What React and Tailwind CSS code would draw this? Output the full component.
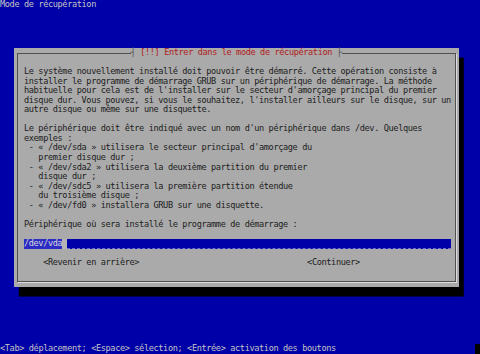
const ROW = "h-[9.568px] whitespace-pre";

const paragraph = [
  "Le système nouvellement installé doit pouvoir être démarré. Cette opération consiste à",
  "installer le programme de démarrage GRUB sur un périphérique de démarrage. La méthode",
  "habituelle pour cela est de l'installer sur le secteur d'amorçage principal du premier",
  "disque dur. Vous pouvez, si vous le souhaitez, l'installer ailleurs sur le disque, sur un",
  "autre disque ou même sur une disquette.",
  "",
  "Le périphérique doit être indiqué avec un nom d'un périphérique dans /dev. Quelques",
  "exemples :",
  " - « /dev/sda » utilisera le secteur principal d'amorçage du",
  "   premier disque dur ;",
  " - « /dev/sda2 » utilisera la deuxième partition du premier",
  "   disque dur ;",
  " - « /dev/sdc5 » utilisera la première partition étendue",
  "   du troisième disque ;",
  " - « /dev/fd0 » installera GRUB sur une disquette.",
  "",
  "Périphérique où sera installé le programme de démarrage :",
  "",
];

export default function App() {
  return (
    <div
      className="flex h-[354px] w-[480px] flex-col overflow-hidden bg-[#0000a8] text-[8.6px] leading-[9.568px] tracking-[-0.377px] text-[#c4c4c4]"
      style={{ fontFamily: '"DejaVu Sans Mono", monospace' }}
    >
      <div className={ROW}>Mode de récupération</div>

      {/* dialog */}
      <div className="mt-[38.27px] ml-[14.4px] h-[239.2px] w-[445px] bg-[#aaaaaa] text-[#1c1c1c] shadow-[4.8px_9.568px_0_0_#000]">
        <div className="relative mt-[4.78px] mr-[3px] ml-[2.4px] h-[229.6px] border border-[#505050] shadow-[1px_1px_0_0_#dcdcdc] pt-[13.4px] pl-[6.2px]">
          <div className="absolute -top-[5.3px] left-[112.8px] flex h-[9.568px] items-center bg-[#aaaaaa] whitespace-pre">
            <span className="text-[#505050]">┤ </span>
            <span className="text-[#b02020]">[!!] Entrer dans le mode de récupération</span>
            <span className="text-[#505050]"> ├</span>
          </div>

          {paragraph.map((line, i) => (
            <div key={i} className={ROW}>
              {line}
            </div>
          ))}

          {/* input field */}
          <div className="flex h-[9.568px] w-[427.2px] bg-[#0000a8]">
            <span className="bg-[#2c2cc4] whitespace-pre text-[#d8d8d8]">/dev/vda</span>
            <span className="w-[4.8px] bg-[#b4b4b4]" />
            <span className="flex-1 border-b border-dashed border-[#6a6ad0]" />
          </div>

          <div className={ROW} />

          <div className="flex h-[9.568px] whitespace-pre">
            <span className="ml-[19.2px]">&lt;Revenir en arrière&gt;</span>
            <span className="ml-[168px]">&lt;Continuer&gt;</span>
          </div>
        </div>
      </div>

      <div className="mt-auto flex h-[9.568px] whitespace-pre">
        <span className="flex-1">
          &lt;Tab&gt; déplacement; &lt;Espace&gt; sélection; &lt;Entrée&gt; activation des boutons
        </span>
        <span className="w-[4.8px] bg-black" />
      </div>
    </div>
  );
}
